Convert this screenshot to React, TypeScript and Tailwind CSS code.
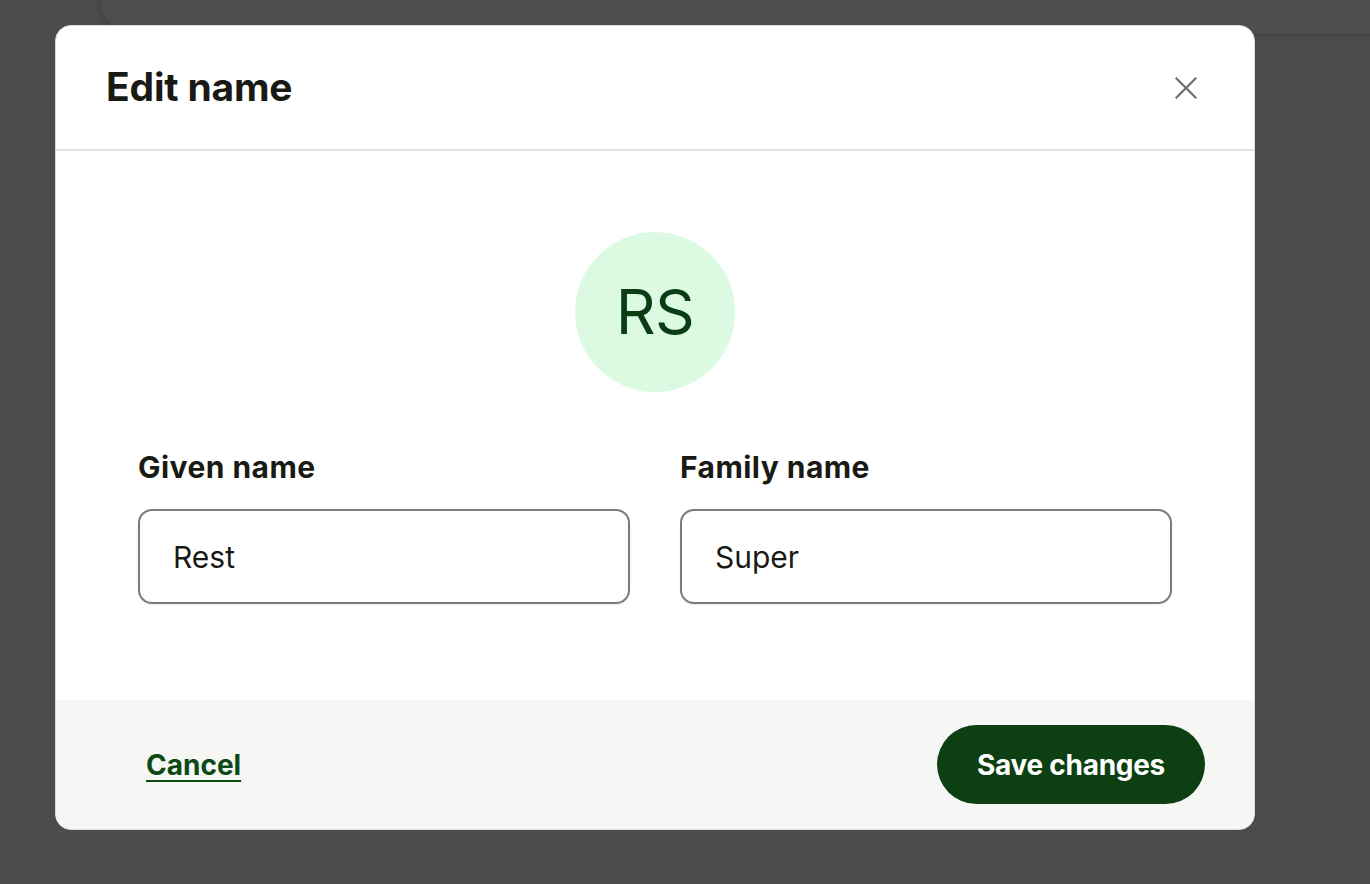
import React from "react";

export default function App() {
  const font = { fontFamily: "Inter, 'Noto Sans', sans-serif" };
  return (
    <div className="relative h-[884px] w-[1370px] overflow-hidden bg-[#4c4c4c]" style={font}>
      {/* dimmed card behind overlay */}
      <div className="absolute left-[100px] top-[-60px] h-[94px] w-[1320px] rounded-[34px] bg-[#4d4d4d] shadow-[0_2px_6px_rgba(0,0,0,0.18)]" />
      <div className="relative pl-[55px] pt-[25px]">
        <div className="flex w-[1200px] flex-col overflow-hidden rounded-[16px] border border-[#dcdcd6] bg-white">
          {/* header */}
          <div className="flex h-[125px] items-center justify-between border-b-2 border-[#e4e4de] pl-[50px] pr-[56px]">
            <h2 className="text-[39px] font-bold tracking-[-0.005em] text-[#1a1a14]">Edit name</h2>
            <button className="flex h-[24px] w-[24px] items-center justify-center">
              <svg width="22" height="22" viewBox="0 0 22 22" fill="none">
                <path d="M1.5 1.5L20.5 20.5M20.5 1.5L1.5 20.5" stroke="#707069" strokeWidth="2.2" strokeLinecap="square" />
              </svg>
            </button>
          </div>
          {/* body */}
          <div className="flex h-[549px] flex-col items-center px-[82px] pt-[81px]">
            <div className="flex h-[160px] w-[160px] items-center justify-center rounded-full bg-[#dcfae2]">
              <span className="text-[62px] font-normal leading-none tracking-[-0.01em] text-[#0b3d14]">RS</span>
            </div>
            <div className="mt-[55px] grid w-full grid-cols-2 gap-[50px]">
              <div className="flex flex-col">
                <label className="text-[30px] font-bold leading-[40px] tracking-[0.015em] text-[#1a1a14]">Given name</label>
                <input
                  defaultValue="Rest"
                  className="mt-[22px] h-[95px] w-full rounded-[14px] border-2 border-[#7c7c74] px-[33px] text-[30px] text-[#1a1a14] outline-none shadow-[0_1px_2px_rgba(0,0,0,0.08)]"
                />
              </div>
              <div className="flex flex-col">
                <label className="text-[30px] font-bold leading-[40px] tracking-[0.015em] text-[#1a1a14]">Family name</label>
                <input
                  defaultValue="Super"
                  className="mt-[22px] h-[95px] w-full rounded-[14px] border-2 border-[#7c7c74] px-[33px] text-[30px] text-[#1a1a14] outline-none shadow-[0_1px_2px_rgba(0,0,0,0.08)]"
                />
              </div>
            </div>
          </div>
          {/* footer */}
          <div className="flex h-[129px] items-center justify-between bg-[#f6f6f4] pl-[90px] pr-[49px]">
            <button className="text-[28px] font-bold text-[#0b4a14] underline decoration-2 underline-offset-[5px]">Cancel</button>
            <button className="flex h-[79px] w-[268px] items-center justify-center rounded-full bg-[#0c3f12] text-[28px] font-bold tracking-[-0.01em] text-white">
              Save changes
            </button>
          </div>
        </div>
      </div>
    </div>
  );
}
